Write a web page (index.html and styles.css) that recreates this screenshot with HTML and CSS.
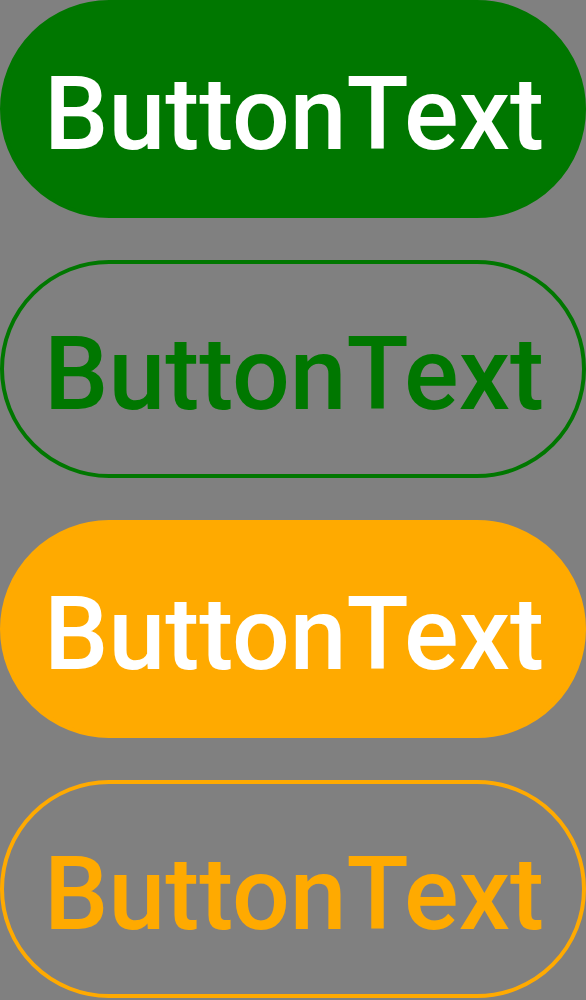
FILE: index.html
```html
<!DOCTYPE html>
<html>
<head>
<meta charset="utf-8">
<link rel="stylesheet" href="styles.css">
</head>
<body>
<div class="stack">
  <button class="btn btn-green-fill">ButtonText</button>
  <button class="btn btn-green-outline">ButtonText</button>
  <button class="btn btn-orange-fill">ButtonText</button>
  <button class="btn btn-orange-outline">ButtonText</button>
</div>
</body>
</html>
```
FILE: styles.css
```css
html, body {
  margin: 0;
  padding: 0;
  background: #808080;
}
.stack {
  display: flex;
  flex-direction: column;
  gap: 42px;
  width: 586px;
}
.btn {
  box-sizing: border-box;
  width: 586px;
  height: 218px;
  border-radius: 109px;
  border: 4px solid transparent;
  margin: 0;
  padding: 10px 0 0 2px;
  font-family: Roboto, "Noto Sans", sans-serif;
  font-weight: 500;
  font-size: 102px;
  line-height: 1;
  display: flex;
  align-items: center;
  justify-content: center;
}
.btn-green-fill {
  background: #007700;
  border-color: #007700;
  color: #ffffff;
}
.btn-green-outline {
  background: transparent;
  border-color: #007700;
  color: #007700;
}
.btn-orange-fill {
  background: #ffaa00;
  border-color: #ffaa00;
  color: #ffffff;
}
.btn-orange-outline {
  background: transparent;
  border-color: #ffaa00;
  color: #ffaa00;
}
```
